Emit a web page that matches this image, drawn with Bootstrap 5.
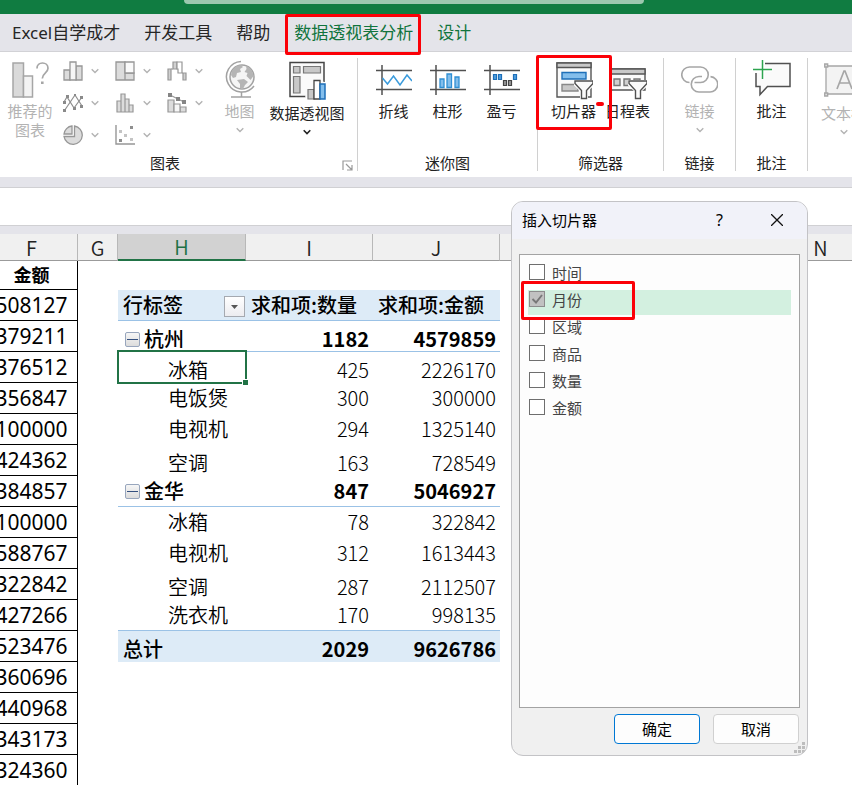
<!DOCTYPE html>
<html lang="zh-CN">
<head>
<meta charset="utf-8">
<meta name="viewport" content="width=device-width, initial-scale=1">
<title>Excel 数据透视表 - 插入切片器</title>
<link rel="stylesheet" href="https://cdn.jsdelivr.net/npm/bootstrap@5.3.0/dist/css/bootstrap.min.css">
<style>
  body { font-family: "Noto Sans", "Noto Sans CJK SC", sans-serif; font-size: 15px; line-height: 20px; color: #222; background: #fff; padding-right: 1px; }
  .app { min-height: 100vh; }
  button { font: inherit; color: inherit; background: none; border: 0; padding: 0; }
  svg { display: block; }

  .titlebar { background: #107c41; height: 14px; }
  .search-stub { width: 54%; margin-left: 184px; height: 4px; background: #9cc8af; border-radius: 0 0 4px 4px; }
  .tabs { background: #e4e4ea; height: 38px; gap: 24px; padding-left: 12px; font-size: 17px; line-height: 24px; border-bottom: 1px solid #d2d2d6; }
  .tabs a { color: #262626; text-decoration: none; white-space: nowrap; }
  .tabs a.context { color: #10743d; }
  .marker { position: absolute; border: 3px solid #fb0007; border-radius: 2px; pointer-events: none; z-index: 5; }
  .marker-tab { inset: -7px -8px -10px -9px; }
  .marker-slicer { inset: -3px -11px -9px -11px; }
  .marker-item { top: -9px; left: -7px; width: 114px; height: 39px; }
  .marker-dash { position: absolute; right: -3px; top: 44px; width: 8px; height: 4px; border-radius: 2px; background: #fb0007; z-index: 5; }

  .ribbon { height: 125px; padding: 6px 0; background: #fff; }
  .group { border-right: 1px solid #d0d0d0; }
  .group-title { line-height: 16px; }
  .w-chart { width: 358px; } .w-spark { width: 180px; } .w-filter { width: 126px; } .w-one { width: 72px; }
  .group-open { border-right: 0; width: 120px; }
  .big { width: 54px; line-height: 19px; white-space: nowrap; }
  .big .pic { height: 44px; }
  .big.tall .pic { height: 46px; }
  .big.wide { width: 60px; } .big.globe { width: 41px; } .big.pivot { width: 78px; } .big.one { width: 71px; }
  .big:disabled, .mini:disabled { color: #b3b3b3; }
  .minis { display: grid; grid-template-columns: repeat(3, 52px); grid-auto-rows: 20px; row-gap: 12px; margin-left: 3px; padding-top: 3px; }
  .mini { display: flex; gap: 8px; height: 20px; align-items: center; }
  .chev { width: 8px; height: 6px; fill: none; stroke: #b3b3b3; stroke-width: 1.4; }
  .big .chev { margin-top: 6px; }
  .chev.dark { stroke: #222; stroke-width: 1.6; }

  .formula-wrap { background: #e4e4ea; padding: 10px 0 8px; }
  .formula { height: 39px; background: #fff; border: 0; border-top: 1px solid #d0d0d3; border-bottom: 1px solid #d0d0d3; width: 100%; outline: 0; }

  .sheet-wrap { overflow-x: clip; }
  /* The view is scrolled so that the first column starts off the left edge. */
  .sheet { margin-left: -14px; }
  .sheet table { table-layout: fixed; width: 100%; border-collapse: separate; border-spacing: 0; font-family: "Noto Sans CJK SC", sans-serif; font-size: 20px; line-height: 24px; color: #000; }
  .sheet td, .sheet th { padding: 0; height: 31px; white-space: nowrap; vertical-align: middle; border-bottom: 1px solid transparent; }
  .sheet thead th { height: 27px; padding-top: 1px; background: #f0f0f0; border-bottom: 1px solid #9b9b9b; border-right: 1px solid #b8b8b8; font-weight: 350; text-align: center; color: #222; }
  .sheet thead th.active { background: #d2d2d2; color: #1e7145; border-bottom: 2px solid #217346; }
  .sheet thead th:last-child { border-right: 0; }
  .sheet tr.first > * { height: 29px; }
  .sheet tbody .src { text-align: center; font-family: "Noto Sans", "Noto Sans CJK SC", sans-serif; font-size: 21px; border-bottom: 1px solid #000; border-right: 1px solid #000; }
  .sheet tbody th.src { font-size: 18px; }
  .sheet .low > .p { vertical-align: bottom; }
  .p.num { text-align: right; padding-right: 4px !important; font-weight: 300; }
  .p.name { padding-left: 50px !important; font-weight: 350; text-align: left; }
  .p.lead-cell { padding-left: 5px !important; }
  .strong > .p { font-weight: 700 !important; }
  .lined > .p { border-bottom-color: #9bc2e6 !important; }
  .tint > .p { background: #ddebf7; }
  .p.field { text-align: left; padding-left: 5px !important; }
  .strong > .p.field, .strong > .p.name { font-weight: 500 !important; }
  .fold { width: 15px; height: 15px; border: 1px solid #98a6bd; border-radius: 2px; background: linear-gradient(#f6f6f6, #dcdcdc); margin: 0 4px 0 2px; }
  .fold::before { content: ""; display: block; height: 1px; margin: 0 1px; background: #35507f; }
  .drop { width: 21px; height: 21px; border: 1px solid #a5a9b0; background: linear-gradient(#fff, #ececf0); margin-right: 1px; }
  .cursor { position: absolute; inset: -2px -1px; border: 2px solid #217346; z-index: 2; }
  .cursor::after { content: ""; position: absolute; right: -4px; bottom: -4px; width: 7px; height: 7px; background: #217346; border: 1px solid #fff; }

  .dialog { position: absolute; left: 511px; top: 201px; width: 297px; border: 1px solid #c3c3c6; border-radius: 12px; background: #f0f0f0; overflow: hidden; color: #000; z-index: 10; }
  .dialog-title { background: #f1f2f9; height: 37px; padding: 0 24px 2px 10px; }
  .dialog-title .help { margin-right: 48px; font-size: 16px; }
  .fields { margin: 15px 7px 6px; height: 454px; border: 1px solid #a3a3a3; background: #fdfdfd; padding: 8px; gap: 2px; }
  .fields .item { height: 25px; gap: 7px; padding: 1px; }
  .fields label { line-height: 19px; color: #444; }
  .fields .item.on { background: #d3f0e0; }
  .fields .form-check-input { width: 16px; height: 16px; border: 1px solid #6e6e6e; border-radius: 0; background-color: #fff; margin: 0; box-shadow: none; }
  .fields .form-check-input:checked { background-color: #c1c1c1; border-color: #8c8c8c; background-size: 14px; background-image: url("data:image/svg+xml,%3csvg xmlns='http://www.w3.org/2000/svg' viewBox='0 0 14 14'%3e%3cpath d='M2.500 7l3.500 3.500 6-7.500' fill='none' stroke='%23777' stroke-width='1.900'/%3e%3c/svg%3e"); }
  .actions { gap: 13px; padding: 0 8px 11px; }
  .actions .btn { width: 86px; height: 30px; padding: 0; font-size: 15px; line-height: 20px; background: #fdfdfd; border: 1px solid #d0d0d0; color: #000; border-radius: 4px; }
  .actions .btn.ok { border-color: #0078d4; }
  .grip { position: absolute; right: 1px; bottom: 1px; }
</style>
<script src="https://cdn.jsdelivr.net/npm/bootstrap@5.3.0/dist/js/bootstrap.bundle.min.js"></script>
</head>
<body>
<svg width="0" height="0" class="position-absolute" aria-hidden="true">
  <symbol id="chev" viewBox="0 0 8 6"><path d="M.7 1.200L4 4.500 7.300 1.200"/></symbol>
  <symbol id="funnel" viewBox="0 0 20 20"><path d="M1 1h18v3.500l-6.500 6V19h-5v-8.500L1 4.500z" fill="#fff" stroke="#fff" stroke-width="3"/><path d="M1 1h18v2.500l-6.500 7V18.500h-5V10.500L1 3.500z" fill="#fafafa" stroke="#505050" stroke-width="1.400"/></symbol>
</svg>
<div class="app position-relative overflow-hidden">
  <header>
    <div class="titlebar"><div class="search-stub"></div></div>
    <nav class="tabs d-flex align-items-center" aria-label="功能区选项卡">
      <a href="#">Excel自学成才</a>
      <a href="#">开发工具</a>
      <a href="#">帮助</a>
      <a href="#" class="context position-relative">数据透视表分析<span class="marker marker-tab"></span></a>
      <a href="#" class="context">设计</a>
    </nav>
  </header>

  <section class="ribbon d-flex overflow-hidden" aria-label="功能区">
    <div class="group w-chart flex-shrink-0 d-flex flex-column justify-content-between">
      <div class="d-flex align-items-start">
        <button class="big wide d-flex flex-column align-items-center" disabled>
          <span class="pic"><svg width="37" height="42" viewBox="0 0 37 42" fill="none" stroke="#a6a6a6" stroke-width="1.500"><path d="M1 5h10.500v34H1z" fill="#dadada"/><path d="M11.500 18h9v21h-9z" fill="#f3f3f3"/><path d="M25 10.500C25 7 27.500 5 30.500 5s5.500 2 5.500 5.200c0 5-5.700 5-5.700 10.300" stroke-width="1.700"/><path d="M29 23.500h2.600v2.500H29z" fill="#a6a6a6" stroke="none"/></svg></span>
          <span>推荐的<br>图表</span>
        </button>
        <div class="minis">
          <button class="mini" disabled aria-label="柱形图"><svg width="20" height="20" fill="#dcdcdc" stroke="#979797" stroke-width="1.300"><path d="M1 9h6v10H1zM13 5h6v14h-6z"/><path d="M7 1h6v18H7z" fill="#f6f6f6"/></svg><svg class="chev"><use href="#chev"/></svg></button>
          <button class="mini" disabled aria-label="层次结构图表"><svg width="20" height="20" fill="#dcdcdc" stroke="#979797" stroke-width="1.300"><path d="M1 1h9v18H1zM10 12h9v7h-9z"/><path d="M10 1h9v11h-9z" fill="#fafafa"/></svg><svg class="chev"><use href="#chev"/></svg></button>
          <button class="mini" disabled aria-label="瀑布图"><svg width="20" height="20" fill="#d0d0d0" stroke="#979797" stroke-width="1.200"><path d="M1 8h3v11H1zM6 1h4v7H6zM16 12h3v7h-3z"/><path d="M10 1h5v11h-4V8h-1z" fill="#fff"/><path d="M4 8h2M15 12h1" fill="none"/></svg><svg class="chev"><use href="#chev"/></svg></button>
          <button class="mini" disabled aria-label="折线图"><svg width="20" height="20" fill="none" stroke="#8f8f8f" stroke-width="1.200"><path d="M1.500 17.500L12 2l7 11"/><path d="M1 9L4 4l7 11 8-11"/><g fill="#8a8a8a" stroke="none"><path d="M0 16h3v3H0zM3 2h3v3H3zM10 14h3v3h-3zM17 3h3v3h-3zM0 8h3v3H0zM17 12h3v3h-3zM11 1h2v2h-2z"/></g></svg><svg class="chev"><use href="#chev"/></svg></button>
          <button class="mini" disabled aria-label="直方图"><svg width="20" height="20" fill="#dcdcdc" stroke="#979797" stroke-width="1.200"><path d="M2 8h4v11H2zM6 1h4v18H6zM10 6h4v13h-4zM14 12h4v7h-4z"/></svg><svg class="chev"><use href="#chev"/></svg></button>
          <button class="mini" disabled aria-label="组合图"><svg width="20" height="20" fill="#dcdcdc" stroke="#979797" stroke-width="1.200"><path d="M1 7h6v12H1zM13 14h6v5h-6z"/><path d="M7 11h6v8H7z" fill="#f6f6f6"/><path d="M3 2l8 4 6 3" fill="none"/><g fill="#858585" stroke="none"><path d="M1 0h4v4H1zM9 4h4v4H9zM15 7h4v4h-4z"/></g></svg><svg class="chev"><use href="#chev"/></svg></button>
          <button class="mini" disabled aria-label="饼图"><svg width="20" height="20" fill="#dcdcdc" stroke="#979797" stroke-width="1.300"><path d="M11.500 1A9.200 9.200 0 1 1 1 11.500h10.500z"/><path d="M9 1v8H1A9 9 0 0 1 9 1z"/></svg><svg class="chev"><use href="#chev"/></svg></button>
          <button class="mini" disabled aria-label="散点图"><svg width="20" height="20" fill="none" stroke="#979797" stroke-width="1.400"><path d="M1 0v19h19"/><g stroke="none" fill="#8f8f8f"><path d="M15 1h3v3h-3zM4 14h3v3H4z"/><path d="M4 5h3v3H4zM9 9h3v3H9zM15 13h3v3h-3z" fill="#c4c4c4"/></g></svg><svg class="chev"><use href="#chev"/></svg></button>
        </div>
        <button class="big globe d-flex flex-column align-items-center" disabled>
          <span class="pic"><svg width="32" height="42" viewBox="0 0 32 42" fill="none" stroke="#a2a2a2" stroke-width="1.500"><circle cx="18" cy="19" r="12" fill="#f5f5f5"/><path d="M8 13c2-4 5-6 9-6l2 2-3 2 1 3-4 1-1 4-3 1-2-3zM22 8c4 1 7 5 7.500 10l-3 4-4-4 1-3-3-1 2-3zM13 22l7-1 4 3-3 3-2 4-3-1v-4z" fill="#b5b5b5" stroke="none"/><path d="M17 3.500a15.300 15.300 0 1 0 13 24.500M17.500 34v5M7 39h20"/></svg></span>
          <span>地图</span><svg class="chev"><use href="#chev"/></svg>
        </button>
        <button class="big pivot tall d-flex flex-column align-items-center ms-2">
          <span class="pic"><svg width="38" height="42" viewBox="-1 0 38 42" fill="none" stroke="#454545" stroke-width="1.500"><path d="M16.500 38.500H1v-34h34V24" fill="#fafafa"/><path d="M16.500 38.500L35 24" stroke="#fafafa"/><g fill="#c8c8c8" stroke="#777" stroke-width="1.200"><path d="M4.500 8.500h6.500v6.500H4.500zM14.500 8.500h17v6.500h-17zM4.500 18.500h6.500V35H4.500zM19 31.500h6V41h-6z"/></g><path d="M25 22.500h6V41h-6z" fill="#fff" stroke-width="1.300"/><path d="M31 26h5v15h-5z" fill="#83beec" stroke="#1e6fb8"/></svg></span>
          <span>数据透视图</span><svg class="chev dark"><use href="#chev"/></svg>
        </button>
      </div>
      <div class="d-flex align-items-end justify-content-end pe-1">
        <div class="group-title flex-fill text-center ps-1 pe-3">图表</div>
        <button aria-label="图表选项"><svg width="11" height="11" fill="none" stroke="#999" stroke-width="1.200"><path d="M1 10V1h9M4 4l6 6M10 5v5H5"/></svg></button>
      </div>
    </div>

    <div class="group w-spark flex-shrink-0 d-flex flex-column justify-content-between">
      <div class="d-flex justify-content-center">
        <button class="big d-flex flex-column align-items-center"><span class="pic"><svg width="36" height="42" fill="none" stroke="#505050" stroke-width="1.500"><path d="M0 12.500h36M0 31.500h36M6 7v30"/><path d="M6.500 20l5 6 6-8 6.500 9 7-10 5 6" stroke="#3a9bdc"/></svg></span><span>折线</span></button>
        <button class="big d-flex flex-column align-items-center"><span class="pic"><svg width="36" height="42" fill="none" stroke="#505050" stroke-width="1.500"><path d="M0 12.500h36M0 31.500h36M6 7v30"/><path d="M10 21h4v8.500h-4zM17 16h4.500v13.500H17zM25 19h4v10.500h-4z" fill="#83beec" stroke="#2f8fd3" stroke-width="1.300"/></svg></span><span>柱形</span></button>
        <button class="big d-flex flex-column align-items-center"><span class="pic"><svg width="36" height="42" fill="none" stroke="#505050" stroke-width="1.500"><path d="M0 12.500h36M0 31.500h36M6 7v30"/><path d="M9.500 16.500h3v5h-3zM14.500 16.500h3v5h-3zM29.500 16.500h3v5h-3z" fill="#4f9fe0" stroke="#1e6fb8" stroke-width="1.200"/><path d="M19.500 22.500h3v5h-3zM24.500 22.500h3v5h-3z" fill="#999" stroke="#444" stroke-width="1.200"/></svg></span><span>盈亏</span></button>
      </div>
      <div class="group-title text-center">迷你图</div>
    </div>

    <div class="group w-filter flex-shrink-0 d-flex flex-column justify-content-between">
      <div class="d-flex justify-content-center">
        <button class="big d-flex flex-column align-items-center position-relative"><span class="pic"><svg width="38" height="42" viewBox="-1 0 38 42" fill="none" stroke="#555" stroke-width="1.400"><path d="M1 5h34v34H1z" fill="#fafafa"/><path d="M1 5h34v4.500H1z" fill="#c8c8c8"/><path d="M6 14.500h24v6.500H6z" fill="#83beec" stroke="#1e6fb8"/><path d="M6 26.500h16v6.500H6z" fill="#c8c8c8" stroke="#888"/><use href="#funnel" x="18" y="22" width="20" height="20"/></svg></span><span>切片器</span><span class="marker marker-slicer"></span><span class="marker-dash"></span></button>
        <button class="big d-flex flex-column align-items-center"><span class="pic"><svg width="38" height="42" viewBox="-1 0 38 42" fill="none" stroke="#555" stroke-width="1.400"><path d="M1 11h34v21H1z" fill="#fafafa"/><path d="M1 11h34v5H1z" fill="#c8c8c8"/><path d="M4 21h6v6.500H4zM14 21h6v6.500h-6zM24 21h6v6.500h-6z" fill="#d0d0d0" stroke="#777"/><use href="#funnel" x="18" y="22" width="20" height="20"/></svg></span><span>日程表</span></button>
      </div>
      <div class="group-title text-center">筛选器</div>
    </div>

    <div class="group w-one flex-shrink-0 d-flex flex-column justify-content-between">
      <button class="big one d-flex flex-column align-items-center" disabled><span class="pic"><svg width="37" height="42" fill="none" stroke="#a6a6a6" stroke-width="1.600"><path d="M8.500 24.500a7.700 7.700 0 0 1 0-15.500h11a7.700 7.700 0 0 1 0 15.500h-6"/><path d="M21 18.500h-3a7.700 7.700 0 0 0 0 15.500h10.500a7.700 7.700 0 0 0 1-15.400"/></svg></span><span>链接</span><svg class="chev"><use href="#chev"/></svg></button>
      <div class="group-title text-center">链接</div>
    </div>

    <div class="group w-one flex-shrink-0 d-flex flex-column justify-content-between">
      <button class="big one d-flex flex-column align-items-center"><span class="pic"><svg width="38" height="42" fill="none"><path d="M12 5.500h25v23H15l-8 7.500v-7.500H3V15h9z" fill="#fafafa"/><path d="M12 5.500h25v23H14.500L7 36.500v-8H3V15" stroke="#505050" stroke-width="1.500"/><path d="M9.500 2v19M0 11.500h19" stroke="#fff" stroke-width="4"/><path d="M9.500 2v19M0 11.500h19" stroke="#2ea44f" stroke-width="1.500"/></svg></span><span>批注</span></button>
      <div class="group-title text-center">批注</div>
    </div>

    <div class="group group-open flex-shrink-0">
      <button class="big one tall d-flex flex-column align-items-center" disabled><span class="pic"><svg width="40" height="42" fill="none" stroke="#a6a6a6" stroke-width="1.300"><path d="M2 8h36v28H2z" fill="#f3f3f3"/><path d="M13 31l7-18h1l7 18M15.500 25h10" stroke-width="1.700"/><path d="M.7 6h3v3h-3zM.7 35h3v3h-3z" fill="#ddd"/></svg></span><span>文本框</span><svg class="chev"><use href="#chev"/></svg></button>
    </div>
  </section>

  <div class="formula-wrap"><input class="formula d-block" type="text" aria-label="编辑栏"></div>

  <main class="sheet-wrap"><div class="sheet">
    <table>
      <colgroup><col style="width:92px"><col style="width:40px"><col style="width:128px"><col style="width:127px"><col style="width:127px"><col><col style="width:63px"></colgroup>
      <thead><tr><th>F</th><th>G</th><th class="active">H</th><th>I</th><th>J</th><th></th><th>N</th></tr></thead>
      <tbody>
        <tr class="first"><th class="src">金额</th></tr>
        <tr class="strong tint lined"><td class="src">508127</td><td></td><th class="p lead-cell name"><div class="d-flex justify-content-between align-items-end"><span>行标签</span><button class="drop" aria-label="筛选行标签"><svg width="19" height="19"><path d="M6 8h7l-3.500 4z" fill="#555"/></svg></button></div></th><th class="p field">求和项:数量</th><th class="p field">求和项:金额</th></tr>
        <tr class="strong lined low"><td class="src">379211</td><td></td><th class="p lead-cell name"><div class="d-flex align-items-center"><button class="fold" aria-label="折叠杭州"></button>杭州</div></th><td class="p num">1182</td><td class="p num">4579859</td></tr>
        <tr class="low"><td class="src">376512</td><td></td><td class="p name position-relative">冰箱<span class="cursor"></span></td><td class="p num">425</td><td class="p num">2226170</td></tr>
        <tr><td class="src">356847</td><td></td><td class="p name">电饭煲</td><td class="p num">300</td><td class="p num">300000</td></tr>
        <tr><td class="src">100000</td><td></td><td class="p name">电视机</td><td class="p num">294</td><td class="p num">1325140</td></tr>
        <tr class="low"><td class="src">424362</td><td></td><td class="p name">空调</td><td class="p num">163</td><td class="p num">728549</td></tr>
        <tr class="strong lined"><td class="src">384857</td><td></td><th class="p lead-cell name"><div class="d-flex align-items-center"><button class="fold" aria-label="折叠金华"></button>金华</div></th><td class="p num">847</td><td class="p num">5046927</td></tr>
        <tr><td class="src">100000</td><td></td><td class="p name">冰箱</td><td class="p num">78</td><td class="p num">322842</td></tr>
        <tr><td class="src">588767</td><td></td><td class="p name">电视机</td><td class="p num">312</td><td class="p num">1613443</td></tr>
        <tr class="low"><td class="src">322842</td><td></td><td class="p name">空调</td><td class="p num">287</td><td class="p num">2112507</td></tr>
        <tr class="lined"><td class="src">427266</td><td></td><td class="p name">洗衣机</td><td class="p num">170</td><td class="p num">998135</td></tr>
        <tr class="strong tint low"><td class="src">523476</td><td></td><th class="p lead-cell name">总计</th><td class="p num">2029</td><td class="p num">9626786</td></tr>
        <tr><td class="src">360696</td></tr>
        <tr><td class="src">440968</td></tr>
        <tr><td class="src">343173</td></tr>
        <tr><td class="src">324360</td></tr>
      </tbody>
    </table>
  </div></main>

  <div class="dialog" role="dialog" aria-labelledby="dlg-title">
    <div class="dialog-title d-flex align-items-center">
      <span id="dlg-title" class="flex-fill">插入切片器</span>
      <button class="help" aria-label="帮助">?</button>
      <button aria-label="关闭"><svg width="12" height="12" stroke="#111" stroke-width="1.300"><path d="M0 0l12 12M12 0L0 12"/></svg></button>
    </div>
    <div class="fields d-flex flex-column">
      <div class="item d-flex align-items-start"><input class="form-check-input" type="checkbox" id="f1"><label for="f1">时间</label></div>
      <div class="item d-flex align-items-start on position-relative"><input class="form-check-input" type="checkbox" id="f2" checked><label for="f2">月份</label><span class="marker marker-item"></span></div>
      <div class="item d-flex align-items-start"><input class="form-check-input" type="checkbox" id="f3"><label for="f3">区域</label></div>
      <div class="item d-flex align-items-start"><input class="form-check-input" type="checkbox" id="f4"><label for="f4">商品</label></div>
      <div class="item d-flex align-items-start"><input class="form-check-input" type="checkbox" id="f5"><label for="f5">数量</label></div>
      <div class="item d-flex align-items-start"><input class="form-check-input" type="checkbox" id="f6"><label for="f6">金额</label></div>
    </div>
    <div class="actions d-flex justify-content-end">
      <button class="btn ok">确定</button>
      <button class="btn">取消</button>
    </div>
    <svg class="grip" width="12" height="12" fill="#bdbdbd"><path d="M8 0h3v3H8zM4 4h3v3H4zM8 4h3v3H8zM0 8h3v3H0zM4 8h3v3H4zM8 8h3v3H8z"/></svg>
  </div>
</div>
</body>
</html>
